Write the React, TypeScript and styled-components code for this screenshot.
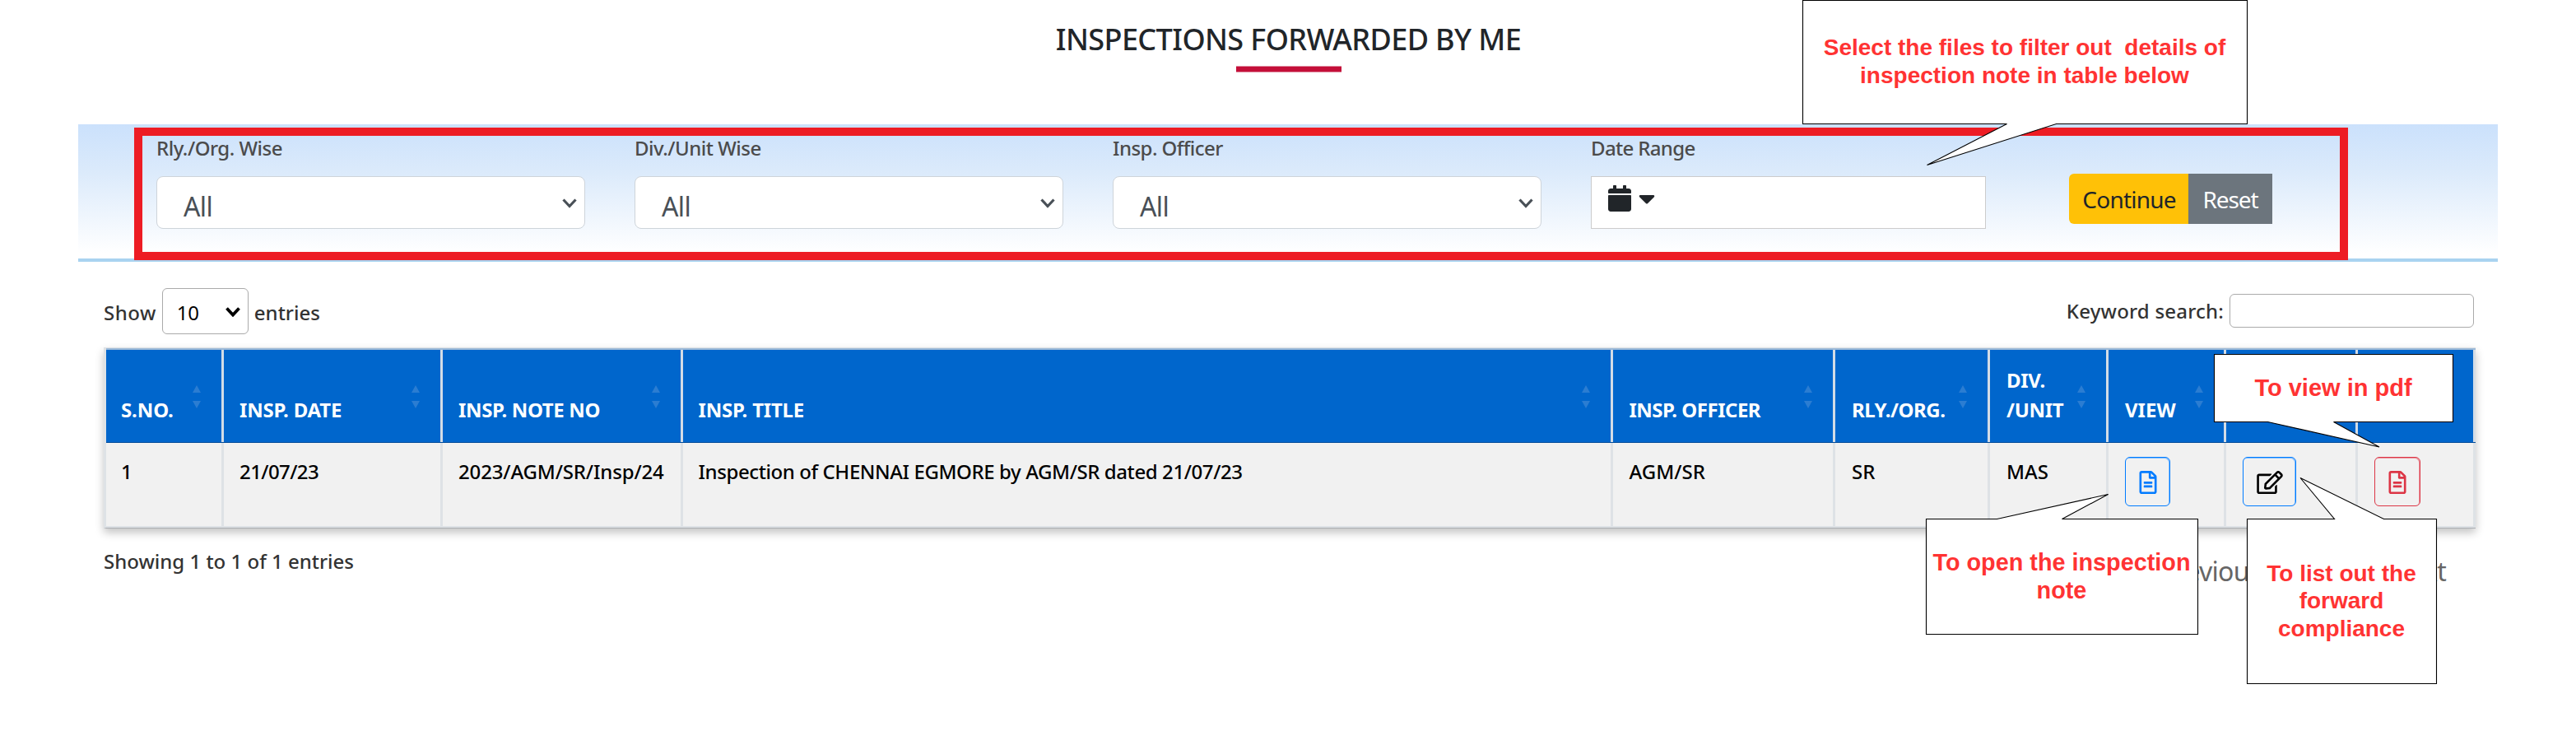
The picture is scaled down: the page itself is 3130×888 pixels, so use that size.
import React from "react";
import styled, { createGlobalStyle } from "styled-components";
import { FaRegFileAlt, FaRegEdit, FaCalendar, FaCaretDown } from "react-icons/fa";

const GlobalStyle = createGlobalStyle`
  * { box-sizing: border-box; }
  body { margin: 0; background: #fff; font-family: "Noto Sans", "Open Sans", sans-serif; }
`;

const Page = styled.div`
  position: relative;
  width: 3130px;
  height: 888px;
  overflow: hidden;
  font-size: 24px;
  font-weight: 500;
  line-height: 36px;
  color: #333;
`;

const Text = styled.span<{ $spacing?: number }>`
  letter-spacing: ${(p) => p.$spacing ?? 0}px;
  white-space: pre;
`;

const TitleBlock = styled.header`
  display: flex;
  flex-direction: column;
  align-items: center;
  padding: 23px 0 0 1px;
  height: 151px;
`;

const Title = styled.h1`
  margin: 0;
  font-size: 36px;
  font-weight: 500;
  line-height: 50px;
  letter-spacing: -0.6px;
  color: #212529;
`;

const TitleBar = styled.div`
  width: 128px;
  height: 8px;
  margin-top: 7px;
  background: #c40f39;
  border: solid #e08da1;
  border-width: 1px 0;
`;

const FilterPanel = styled.section`
  position: relative;
  display: flex;
  align-items: flex-start;
  height: 167px;
  margin: 0 95px;
  padding: 11px 0 0 95px;
  background: linear-gradient(#cbe1fc, #dbeafb 35%, #fff 96%);
  border-bottom: 4px solid #a9d3f0;
`;

const Highlight = styled.div`
  position: absolute;
  left: 68px;
  top: 4px;
  width: 2690px;
  height: 161px;
  border: 10px solid #ed1c24;
`;

const Field = styled.div<{ $width: number; $gap: number }>`
  display: flex;
  flex-direction: column;
  gap: 16px;
  width: ${(p) => p.$width}px;
  margin-right: ${(p) => p.$gap}px;
  color: #4b4b4b;
`;

const SelectBox = styled.div`
  display: flex;
  justify-content: space-between;
  height: 64px;
  padding: 12px 9px 0 32px;
  background: #fff;
  border: 1px solid #ced4da;
  border-radius: 8px;
  font-size: 32px;
  font-weight: 400;
  line-height: 48px;
  color: #495057;
`;

const SelectChevron = styled.svg`
  width: 18px;
  height: 12px;
  margin-top: 14px;
  fill: none;
  stroke: currentColor;
  stroke-width: 3.2;
`;

const DateBox = styled.div`
  display: flex;
  gap: 9px;
  height: 64px;
  padding: 10px 20px;
  background: #fff;
  border: 1px solid #ccc;
  color: #212529;
`;

const CalendarIcon = styled(FaCalendar)`
  width: 28px;
  height: 32px;
`;

const CaretIcon = styled(FaCaretDown)`
  width: 20px;
  height: 32px;
`;

const ButtonGroup = styled.div`
  display: flex;
  margin-top: 49px;
`;

const ActionButton = styled.button<{ $primary?: boolean }>`
  width: ${(p) => (p.$primary ? 145 : 102)}px;
  height: 61px;
  padding: ${(p) => (p.$primary ? "1px 0 0 1px" : "1px 0 0")};
  border: 0;
  border-radius: ${(p) => (p.$primary ? "6px 0 0 6px" : "0")};
  background: ${(p) => (p.$primary ? "#ffc107" : "#6c757d")};
  color: ${(p) => (p.$primary ? "#212529" : "#fff")};
  font: 400 28px/60px "Noto Sans", sans-serif;
  letter-spacing: ${(p) => (p.$primary ? -0.8 : -1.1)}px;
`;

const Toolbar = styled.div`
  display: flex;
  justify-content: space-between;
  align-items: center;
  height: 56px;
  margin: 32px 124px 0 126px;
`;

const LengthControl = styled.div`
  display: flex;
  align-items: center;
  gap: 7px;
`;

const LengthLabel = styled(Text)`
  padding-top: 3px;
`;

const LengthSelect = styled.div`
  display: flex;
  justify-content: space-between;
  width: 105px;
  height: 56px;
  padding: 11px 9px 0 17px;
  border: 1px solid #aaa;
  border-radius: 6px;
  font-weight: 400;
  color: #000;
`;

const LengthChevron = styled(SelectChevron)`
  margin-top: 11px;
  stroke-width: 3.8;
`;

const SearchControl = styled.label`
  display: flex;
  align-items: center;
  gap: 7px;
  margin-top: -2px;
`;

const SearchLabel = styled(Text)`
  padding-top: 2px;
`;

const SearchInput = styled.input`
  width: 297px;
  height: 41px;
  border: 1px solid #aaa;
  border-radius: 6px;
  background: #fff;
`;

const columns =
  "143px 266px 291.5px 1130px 270.5px 188px 144px 143px 160px 143px";

const Table = styled.div`
  width: 2882px;
  margin: 16px 0 0 126px;
  border: solid #dee2e6;
  border-width: 1px 0 0 3px;
  border-bottom: 1px solid #aaadb2;
  box-shadow: 0 5px 10px rgba(0, 0, 0, 0.24);
`;

const Row = styled.div`
  display: grid;
  grid-template-columns: ${columns};
`;

const HeadRow = styled(Row)`
  height: 115px;
  border-top: 2px solid #9dbad8;
  border-bottom: 1px solid #004a99;
  background: #0066cc;
  color: #fff;
  font-weight: 700;
`;

const Cell = styled.div`
  padding-left: 19px;
  border-right: 3px solid #dee2e6;

  &:first-child { padding-left: 18px; }
  &:nth-child(n + 5) { padding-left: 20px; }
`;

const HeadCell = styled(Cell)`
  display: flex;
  align-items: flex-end;
  justify-content: space-between;
  padding-right: 25px;
  padding-bottom: 21px;
  border-right-color: #d3dce6;
`;

const SortIcon = styled.svg`
  flex: none;
  width: 10px;
  height: 28px;
  margin-bottom: 20px;
  fill: #2b7dd2;
`;

const BodyRow = styled(Row)`
  height: 103px;
  background: #f1f1f1;
  color: #000;
  border-bottom: 2px solid #dee2e6;
`;

const BodyCell = styled(Cell)`
  padding-top: 17px;
`;

const IconButton = styled.button<{ $width: number; $edge: string; $tint: string; $color: string }>`
  display: flex;
  align-items: center;
  justify-content: center;
  width: ${(p) => p.$width}px;
  height: 60px;
  padding: 2px 0 0;
  background: transparent;
  border: 1px solid ${(p) => p.$edge};
  border-radius: 6px;
  box-shadow: inset -1px 1px 0 ${(p) => p.$tint};
  color: ${(p) => p.$color};
  font-size: 28px;
`;

const EditIcon = styled(FaRegEdit)`
  width: 32px;
  height: 28px;
`;

const Footer = styled.footer`
  display: flex;
  justify-content: space-between;
  align-items: flex-start;
  margin: 22px 158px 0 126px;
`;

const Pagination = styled.nav`
  display: flex;
  justify-content: space-between;
  width: 347px;
  margin-top: 6px;
  font-size: 32px;
  font-weight: 400;
  line-height: 48px;
  letter-spacing: -0.75px;
  color: #666;
`;

const CalloutBox = styled.div<{ $x: number; $y: number; $w: number; $h: number; $size: number; $line: number }>`
  position: absolute;
  left: ${(p) => p.$x}px;
  top: ${(p) => p.$y}px;
  width: ${(p) => p.$w}px;
  height: ${(p) => p.$h}px;
  display: flex;
  align-items: center;
  justify-content: center;
  text-align: center;
  white-space: pre;
  font: bold ${(p) => p.$size}px/${(p) => p.$line}px "Liberation Sans", Arial, sans-serif;
  color: #ff3333;
`;

const CalloutShape = styled.svg`
  position: absolute;
  inset: 0;
  width: 100%;
  height: 100%;
  overflow: visible;
  fill: #fff;
  stroke: #000;
  stroke-width: 1.1;
`;

const CalloutText = styled.span`
  position: relative;
`;

type CalloutProps = {
  x: number; y: number; w: number; h: number;
  size: number; line: number;
  /** Pointer in box coordinates: left base, tip x, tip y, right base. */
  pointer: [number, number, number, number];
  side: "top" | "bottom";
  text: string;
};

function Callout({ x, y, w, h, size, line, pointer, side, text }: CalloutProps) {
  const [left, tipX, tipY, right] = pointer;
  const d =
    side === "top"
      ? `M0 0H${left}L${tipX} ${tipY}L${right} 0H${w}V${h}H0Z`
      : `M0 0H${w}V${h}H${right}L${tipX} ${tipY}L${left} ${h}H0Z`;
  return (
    <CalloutBox $x={x} $y={y} $w={w} $h={h} $size={size} $line={line}>
      <CalloutShape><path d={d} transform="translate(.5 .5)" /></CalloutShape>
      <CalloutText>{text}</CalloutText>
    </CalloutBox>
  );
}

const chevronPath = <path d="M1.5 1.5L9 9.5L16.5 1.5" />;

const filters: [string, number][] = [
  ["Rly./Org. Wise", -0.5],
  ["Div./Unit Wise", -0.5],
  ["Insp. Officer", -0.55],
];

const heads: [string, number][] = [
  ["S.NO.", -0.1], ["INSP. DATE", -0.2], ["INSP. NOTE NO", -0.35], ["INSP. TITLE", -0.2],
  ["INSP. OFFICER", -0.5], ["RLY./ORG.", -0.45], ["DIV.\n/UNIT", -0.3], ["VIEW", 0],
];

const cells: [string, number][] = [
  ["1", 0], ["21/07/23", -0.6], ["2023/AGM/SR/Insp/24", -0.15],
  ["Inspection of CHENNAI EGMORE by AGM/SR dated 21/07/23", -0.41],
  ["AGM/SR", 0], ["SR", 0], ["MAS", 0],
];

export default function App() {
  return (
    <>
      <GlobalStyle />
      <Page>
        <TitleBlock>
          <Title>INSPECTIONS FORWARDED BY ME</Title>
          <TitleBar />
        </TitleBlock>

        <FilterPanel>
          {filters.map(([label, spacing]) => (
            <Field key={label} $width={521} $gap={60}>
              <Text $spacing={spacing}>{label}</Text>
              <SelectBox>
                <Text $spacing={-0.6}>All</Text>
                <SelectChevron viewBox="0 0 18 12">{chevronPath}</SelectChevron>
              </SelectBox>
            </Field>
          ))}
          <Field $width={480} $gap={101}>
            <Text $spacing={-0.65}>Date Range</Text>
            <DateBox>
              <CalendarIcon />
              <CaretIcon />
            </DateBox>
          </Field>
          <ButtonGroup>
            <ActionButton $primary>Continue</ActionButton>
            <ActionButton>Reset</ActionButton>
          </ButtonGroup>
          <Highlight />
        </FilterPanel>

        <Toolbar>
          <LengthControl>
            <LengthLabel $spacing={0.5}>Show</LengthLabel>
            <LengthSelect>
              <Text $spacing={-0.4}>10</Text>
              <LengthChevron viewBox="0 0 18 12">{chevronPath}</LengthChevron>
            </LengthSelect>
            <LengthLabel>entries</LengthLabel>
          </LengthControl>
          <SearchControl>
            <SearchLabel $spacing={0.2}>Keyword search:</SearchLabel>
            <SearchInput />
          </SearchControl>
        </Toolbar>

        <Table>
          <HeadRow>
            {heads.map(([label, spacing]) => (
              <HeadCell key={label}>
                <Text $spacing={spacing}>{label}</Text>
                <SortIcon viewBox="0 0 10 28">
                  <path d="M5 0L10 9H0ZM5 28L0 19H10Z" />
                </SortIcon>
              </HeadCell>
            ))}
            <HeadCell />
            <HeadCell />
          </HeadRow>
          <BodyRow>
            {cells.map(([value, spacing]) => (
              <BodyCell key={value}>
                <Text $spacing={spacing}>{value}</Text>
              </BodyCell>
            ))}
            <BodyCell>
              <IconButton $width={55} $edge="#007bff" $tint="#80bdff" $color="#007bff"><FaRegFileAlt /></IconButton>
            </BodyCell>
            <BodyCell>
              <IconButton $width={65} $edge="#007bff" $tint="#80bdff" $color="#000"><EditIcon /></IconButton>
            </BodyCell>
            <BodyCell>
              <IconButton $width={56} $edge="#dc3545" $tint="#eb959e" $color="#dc3545"><FaRegFileAlt /></IconButton>
            </BodyCell>
          </BodyRow>
        </Table>

        <Footer>
          <Text>Showing 1 to 1 of 1 entries</Text>
          <Pagination>
            <span>Previous</span>
            <span>1</span>
            <span>Next</span>
          </Pagination>
        </Footer>

        <Callout x={2190} y={0} w={540} h={150} size={28} line={34} side="bottom"
          pointer={[248, 151, 200, 308]} text={"Select the files to filter out  details of\ninspection note in table below"} />
        <Callout x={2690} y={430} w={290} h={82} size={29} line={34} side="bottom"
          pointer={[65, 200.5, 112.5, 145]} text="To view in pdf" />
        <Callout x={2340} y={630} w={330} h={140} size={28.8} line={34.5} side="top"
          pointer={[86, 221, -30, 165]} text={"To open the inspection\nnote"} />
        <Callout x={2730} y={630} w={230} h={200} size={28} line={33.6} side="top"
          pointer={[106, 64.5, -50, 166]} text={"To list out the\nforward\ncompliance"} />
      </Page>
    </>
  );
}
